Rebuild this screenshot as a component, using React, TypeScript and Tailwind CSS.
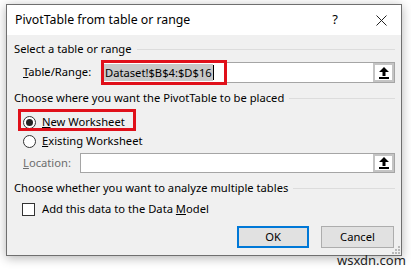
import React from 'react';

const font = { fontFamily: '"Noto Sans", "Segoe UI", Arial, sans-serif' };

function UpButton() {
  return (
    <div className="w-[21px] h-full border-2 border-[#c4c4c4] bg-white flex items-center justify-center">
      <svg width="10" height="12" viewBox="0 0 10 12">
        <polygon points="5,0 10,5 6.5,5 6.5,9 3.5,9 3.5,5 0,5" fill="#000" />
        <rect x="0" y="10" width="10" height="2" fill="#000" />
      </svg>
    </div>
  );
}

function Section({ title, className }: { title: string; className: string }) {
  return (
    <div className={`flex items-center h-4 gap-[5px] ${className}`}>
      <span className="whitespace-nowrap">{title}</span>
      <div className="flex-1 h-px bg-[#dcdcdc]" />
    </div>
  );
}

function Radio({ checked }: { checked?: boolean }) {
  return (
    <div className="w-[13px] h-[13px] rounded-full border border-[#333] bg-white flex items-center justify-center">
      {checked && <div className="w-[7px] h-[7px] rounded-full bg-[#222]" />}
    </div>
  );
}

export default function App() {
  return (
    <div className="relative w-[411px] h-[270px] bg-white overflow-hidden text-[11.2px] text-black" style={font}>
      <div className="absolute left-[6px] top-[4px] w-[396px] h-[252px] border border-[#6f6f6f] bg-[#f0f0f0] shadow-[0_2px_10px_rgba(0,0,0,0.3)] flex flex-col">
        <div className="h-[30px] bg-white flex items-center pl-[8px] pr-[14px] text-[12.3px]">
          <span className="flex-1">PivotTable from table or range</span>
          <span className="mr-[38px] text-[13px]">?</span>
          <svg width="11" height="11" viewBox="0 0 11 11">
            <path d="M0.5 0.5 L10.5 10.5 M10.5 0.5 L0.5 10.5" stroke="#222" strokeWidth="1" />
          </svg>
        </div>
        <div className="pl-[7px] pr-[6px] flex flex-col">
          <Section title="Select a table or range" className="mt-[6px]" />
          <div className="mt-[5px] h-[21px] flex items-center">
            <span className="ml-[9px] w-[78px]"><span className="underline">T</span>able/Range:</span>
            <div className="flex-1 h-full flex border border-[#a5a5a5] bg-white">
              <div className="flex-1 flex items-center pl-[2px]">
                <span className="bg-[#c8c8c8] px-px leading-[17px]">Dataset!$B$4:$D$16</span>
                <span className="w-px h-[15px] bg-black" />
              </div>
              <UpButton />
            </div>
          </div>
          <Section title="Choose where you want the PivotTable to be placed" className="mt-[7px]" />
          <div className="mt-[7px] h-[18px] flex items-center">
            <div className="ml-[9px]"><Radio checked /></div>
            <span className="ml-[6px]"><span className="underline">N</span>ew Worksheet</span>
          </div>
          <div className="mt-px h-[18px] flex items-center">
            <div className="ml-[9px]"><Radio /></div>
            <span className="ml-[6px]"><span className="underline">E</span>xisting Worksheet</span>
          </div>
          <div className="mt-[3px] h-[20px] flex items-center">
            <span className="ml-[9px] w-[57px] text-[#6d6d6d]"><span className="underline">L</span>ocation:</span>
            <div className="flex-1 h-full flex border border-[#a5a5a5] bg-white">
              <div className="flex-1" />
              <UpButton />
            </div>
          </div>
          <Section title="Choose whether you want to analyze multiple tables" className="mt-[7px]" />
          <div className="mt-[4px] h-[18px] flex items-center">
            <div className="ml-[8px] w-[13px] h-[13px] border border-[#333] bg-white" />
            <span className="ml-[7px]">Add this data to the Data <span className="underline">M</span>odel</span>
          </div>
          <div className="mt-[8px] h-[22px] flex justify-end gap-[12px] pr-px">
            <button className="w-[72px] h-full border-2 border-[#0078d7] bg-[#e1e1e1]">OK</button>
            <button className="w-[73px] h-full border border-[#adadad] bg-[#e1e1e1]">Cancel</button>
          </div>
        </div>
        <svg className="absolute right-[1px] bottom-[1px]" width="8" height="8" viewBox="0 0 8 8">
          <rect x="6" y="0" width="2" height="2" fill="#b8b8b8" />
          <rect x="3" y="3" width="2" height="2" fill="#b8b8b8" />
          <rect x="6" y="3" width="2" height="2" fill="#b8b8b8" />
          <rect x="0" y="6" width="2" height="2" fill="#b8b8b8" />
          <rect x="3" y="6" width="2" height="2" fill="#b8b8b8" />
          <rect x="6" y="6" width="2" height="2" fill="#b8b8b8" />
        </svg>
      </div>
      <div className="absolute left-[101px] top-[60px] w-[126px] h-[25px] border-[3px] border-[#e0101a]" />
      <div className="absolute left-[18px] top-[109px] w-[118px] h-[22px] border-[3px] border-[#e0101a]" />
      <div className="absolute left-[337px] top-[252px] text-[13px] text-[#222] leading-[16px]">wsxdn.com</div>
    </div>
  );
}
